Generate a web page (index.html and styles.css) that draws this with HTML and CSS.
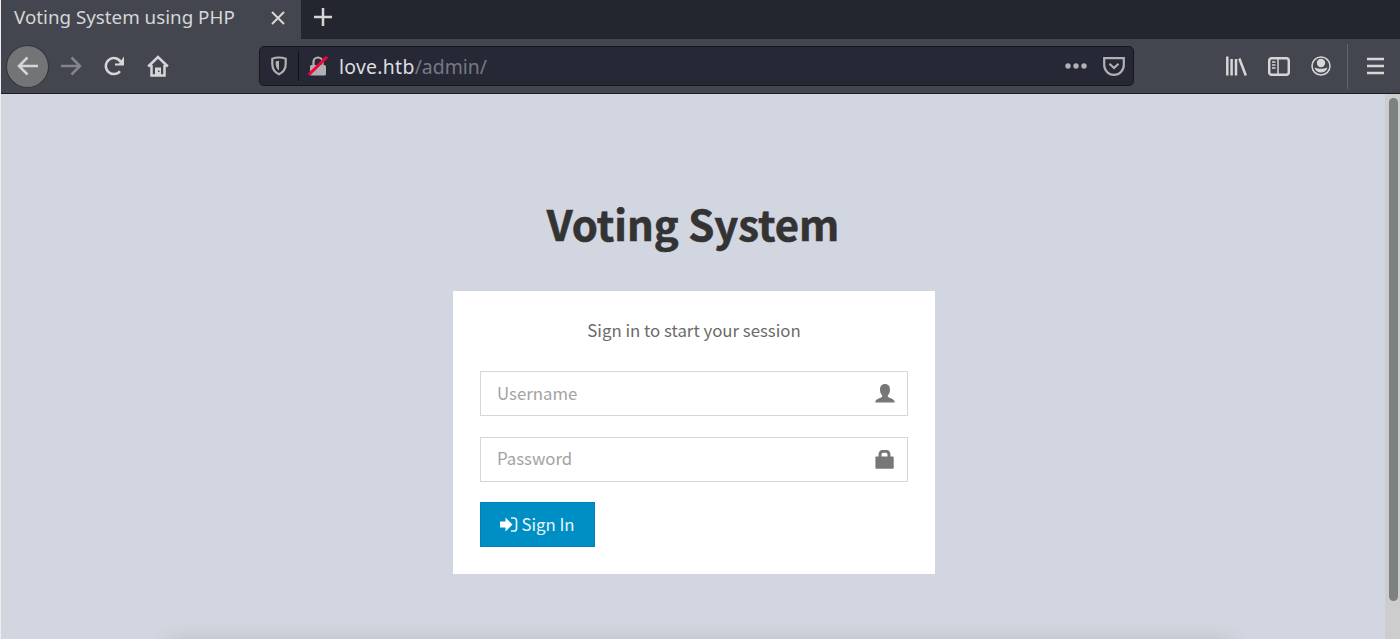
FILE: index.html
```html
<!DOCTYPE html>
<html lang="en">
<head>
<meta charset="UTF-8">
<title>Voting System using PHP</title>
<link rel="stylesheet" href="styles.css">
</head>
<body>

<div class="browser">
  <div class="tabs">
    <div class="tab">
      <span class="tab-title">Voting System using PHP</span>
      <svg class="tab-close" width="14" height="14" viewBox="0 0 14 14"><path d="M1 1l12 12M13 1L1 13"/></svg>
    </div>
    <svg class="tab-new" width="20" height="20" viewBox="0 0 20 20"><path d="M10 1v18M1 10h18"/></svg>
  </div>

  <div class="toolbar">
    <div class="nav-btn back">
      <svg width="22" height="22" viewBox="0 0 22 22"><path d="M21 11H2M10.500 2.500L2 11l8.500 8.500"/></svg>
    </div>
    <div class="nav-btn forward">
      <svg width="22" height="22" viewBox="0 0 22 22"><path d="M1 11h19M11.500 2.500L20 11l-8.500 8.500"/></svg>
    </div>
    <div class="nav-btn">
      <svg width="22" height="22" viewBox="0 0 22 22"><path d="M17.800 7.200A8 8 0 1 0 17 16.200"/><path class="solid" d="M21 1.500v9h-9v-2h4z"/></svg>
    </div>
    <div class="nav-btn">
      <svg width="22" height="22" viewBox="0 0 22 22"><path d="M1.200 11.500L11 2l9.800 9.500M4.500 10v10.400h13V10"/><path class="solid" d="M8 20v-7.500h6V20zM11 15.500v1.500h1.500v-1.500z" fill-rule="evenodd"/></svg>
    </div>

    <div class="urlbar">
      <svg class="shield" width="18" height="20" viewBox="0 0 18 20"><path d="M9 1.500c2.400 0 4.700.4 6.700 1.200V8c0 4.800-2.300 8.200-6.700 10.300C4.600 16.200 2.300 12.800 2.300 8V2.700C4.300 1.900 6.600 1.500 9 1.500z"/><path class="solid" d="M9 4.800v9.800C6.800 13 5.700 11 5.700 8V5.300z"/></svg>
      <span class="url-line"></span>
      <svg class="lock" width="20" height="20" viewBox="0 0 20 20"><path d="M5.500 10V6a4.500 4.500 0 0 1 9 0v4"/><rect class="solid" x="2" y="9" width="16" height="10.500" rx="1.500"/><path class="slash" d="M.8 18.800L19 .8"/></svg>
      <span class="url"><b>love.htb</b>/admin/</span>
      <svg class="dots" width="22" height="6" viewBox="0 0 22 6"><circle cx="3" cy="3" r="2.700"/><circle cx="11" cy="3" r="2.700"/><circle cx="19" cy="3" r="2.700"/></svg>
      <svg class="pocket" width="22" height="19" viewBox="0 0 22 19"><path d="M1.200 1.200h19.600V8a9.800 9.800 0 0 1-19.600 0z"/><path class="check" d="M6.500 6.800L11 11l4.500-4.200"/></svg>
    </div>

    <div class="tools">
      <svg width="21" height="20" viewBox="0 0 21 20"><path d="M1.300.5v19M5.600 3v16.500M10 3v16.500M13.300 2.500L19.800 19.500"/></svg>
      <svg width="22" height="19" viewBox="0 0 22 19"><rect x="1.200" y="1.200" width="19.600" height="16.600" rx="2.500"/><path class="thin" d="M10 1v17M4 5h3.500M4 8h3.500M4 11h3.500"/></svg>
      <svg width="20" height="20" viewBox="0 0 20 20"><circle class="thin" cx="10" cy="10" r="9"/><circle class="solid" cx="10" cy="7" r="4.200"/><path class="solid" d="M3.500 11.500c1.500.3 2.500 1.200 6.500 1.200s5-.9 6.500-1.200c-.8 3.200-3.400 5-6.500 5s-5.700-1.800-6.500-5z"/></svg>
    </div>
    <svg class="menu" width="17" height="18" viewBox="0 0 17 18"><path d="M0 2h17M0 9h17M0 16h17"/></svg>
  </div>
</div>

<div class="page">
  <main class="login-page">
    <h1>Voting System</h1>
    <form class="login-box">
      <p class="login-msg">Sign in to start your session</p>
      <div class="field">
        <input type="text" placeholder="Username">
        <svg width="20" height="19" viewBox="0 0 20 19"><path d="M10 0c3.300 0 5 2.200 5 5.700 0 2.500-.9 4.500-2.100 5.500-.3.900 0 1.700 1 2.200 2.600 1.100 5.600 1.600 5.900 5.100H.2c.3-3.500 3.300-4 5.900-5.100 1-.5 1.300-1.300 1-2.200C5.900 10.200 5 8.200 5 5.700 5 2.200 6.700 0 10 0z"/></svg>
      </div>
      <div class="field">
        <input type="password" placeholder="Password">
        <svg width="20" height="19" viewBox="0 0 20 19"><path fill-rule="evenodd" d="M3.500 6.500V4.500C3.500 1.800 5.200 0 7.500 0h4C13.800 0 15.500 1.800 15.500 4.500v2h2.200c.6 0 1 .4 1 1v10.200c0 .6-.4 1-1 1H1.400c-.6 0-1-.4-1-1V7.500c0-.6.4-1 1-1zM6.500 6.500h6V4.700c0-1.200-.7-2-1.800-2H8.300c-1.100 0-1.800.8-1.800 2z"/></svg>
      </div>
      <button type="button">
        <svg width="18" height="15" viewBox="0 0 18 15"><path d="M0 4.500h5.500V.5l7 7-7 7v-4H0z"/><path class="door" d="M11 1h3a2.500 2.500 0 0 1 2.500 2.500v8A2.500 2.500 0 0 1 14 14h-3"/></svg>
        <span>Sign In</span>
      </button>
    </form>
  </main>
  <div class="scrollbar"><div class="thumb"></div></div>
</div>

</body>
</html>
```

FILE: styles.css
```css
* {
  box-sizing: border-box;
}
body {
  margin: 0;
  height: 639px;
  overflow: hidden;
  display: flex;
  flex-direction: column;
  border-left: 1px solid #eeeeec;
  font-family: "Noto Sans CJK SC", "Noto Sans", sans-serif;
}
svg {
  display: block;
  flex: none;
}

/* browser chrome */
.browser {
  height: 94px;
  background: #44464f;
  border-bottom: 1px solid #1b1c22;
  font-family: "Noto Sans", sans-serif;
  color: #d6d6d7;
}
.browser svg {
  fill: none;
  stroke: #d6d6d6;
  stroke-width: 2.5;
}
.browser svg .solid {
  fill: #d6d6d6;
  stroke: none;
}
.tabs {
  height: 39px;
  display: flex;
  background: #23252f;
}
.tab {
  width: 300px;
  display: flex;
  align-items: center;
  justify-content: space-between;
  padding: 0 16px 3px 13px;
  background: #44464f;
}
.tab-title {
  padding-bottom: 3px;
  font-size: 18.800px;
  line-height: 26px;
  white-space: nowrap;
}
.browser .tab-close {
  stroke-width: 2;
}
.tab-new {
  margin: 7px 0 0 12px;
}
.toolbar {
  height: 54px;
  display: flex;
  align-items: center;
  padding-left: 5px;
}
.nav-btn {
  width: 43.3px;
  height: 43px;
  display: flex;
  align-items: center;
  justify-content: center;
}
.back {
  border-radius: 50%;
  background: #737476;
  border: 1px solid #303139;
}
.browser .forward svg {
  stroke: #84858b;
}
.urlbar {
  width: 875px;
  height: 40px;
  margin-left: 79.800px;
  padding: 0 8px 0 10px;
  display: flex;
  align-items: center;
  background: #262935;
  border: 1px solid #15171c;
  border-radius: 5px;
}
.browser .urlbar svg {
  stroke: #b1b1b3;
  stroke-width: 2.2;
}
.browser .urlbar .solid {
  fill: #b1b1b3;
}
.url-line {
  width: 1px;
  height: 30px;
  margin: 0 9px 0 10px;
  background: #111217;
}
.browser .urlbar .slash {
  stroke: #f0043c;
  stroke-width: 3;
}
.url {
  flex: 1;
  padding-top: 2px;
  margin-left: 11px;
  font-size: 19.400px;
  line-height: 30px;
  color: #777982;
}
.url b {
  font-weight: normal;
  letter-spacing: 0.3px;
  color: #dcdde0;
}
.browser .urlbar .dots {
  fill: #b1b1b3;
  stroke: none;
  margin-right: 16px;
}
.tools {
  height: 45px;
  display: flex;
  align-items: center;
  gap: 21px;
  margin-left: 92px;
  padding-right: 16px;
  border-right: 1px solid #63656d;
}
.browser .thin {
  stroke-width: 1.500;
}
.menu {
  margin-left: 19px;
}

/* page */
.page {
  flex: 1;
  display: flex;
  position: relative;
  background: #d2d6e0;
}
/* soft shade along the lower edge */
.page::after {
  content: "";
  position: absolute;
  left: 170px;
  right: 170px;
  bottom: -14px;
  height: 10px;
  box-shadow: 0 0 20px rgba(80, 80, 90, 0.3);
}
.login-page {
  flex: 1;
  display: flex;
  flex-direction: column;
  align-items: center;
}
h1 {
  margin: 99px 0 0;
  font-size: 41.800px;
  line-height: 60px;
  font-weight: bold;
  -webkit-text-stroke: 0.6px #333;
  color: #333;
}
.login-box {
  width: 482px;
  height: 283px;
  margin-top: 38px;
  margin-left: 2px;
  padding: 25px 27px 27px;
  background: #fff;
}
.login-msg {
  margin: 0 0 27px;
  text-align: center;
  font-size: 16.800px;
  line-height: 28px;
  white-space: nowrap;
  color: #6b6b6b;
}
.field {
  height: 45px;
  margin-bottom: 20.500px;
  padding: 0 12px 0 16px;
  display: flex;
  align-items: center;
  border: 1px solid #d2d6de;
}
.field input {
  flex: 1;
  min-width: 0;
  padding: 0 0 2px;
  border: 0;
  outline: 0;
  background: none;
  font: 16.800px "Noto Sans CJK SC", sans-serif;
  color: #555;
}
.field input::placeholder {
  color: #a3a3a3;
}
.field svg {
  fill: #777;
}
button {
  width: 115px;
  height: 45px;
  padding: 0 0 1px;
  display: flex;
  align-items: center;
  justify-content: center;
  gap: 3px;
  border: 1px solid #0080b5;
  background: #008fc5;
  color: #e9f4f9;
  font: 16.800px "Noto Sans CJK SC", sans-serif;
}
button span {
  padding-bottom: 1px;
}
button svg {
  fill: #fff;
}
button .door {
  fill: none;
  stroke: #e9f4f9;
  stroke-width: 1.700;
}
.scrollbar {
  width: 15px;
  padding: 4px 2px 0 4px;
  background: #cdcdcd;
}
.thumb {
  height: 503px;
  border-radius: 5px;
  background: #7d8182;
}
```
